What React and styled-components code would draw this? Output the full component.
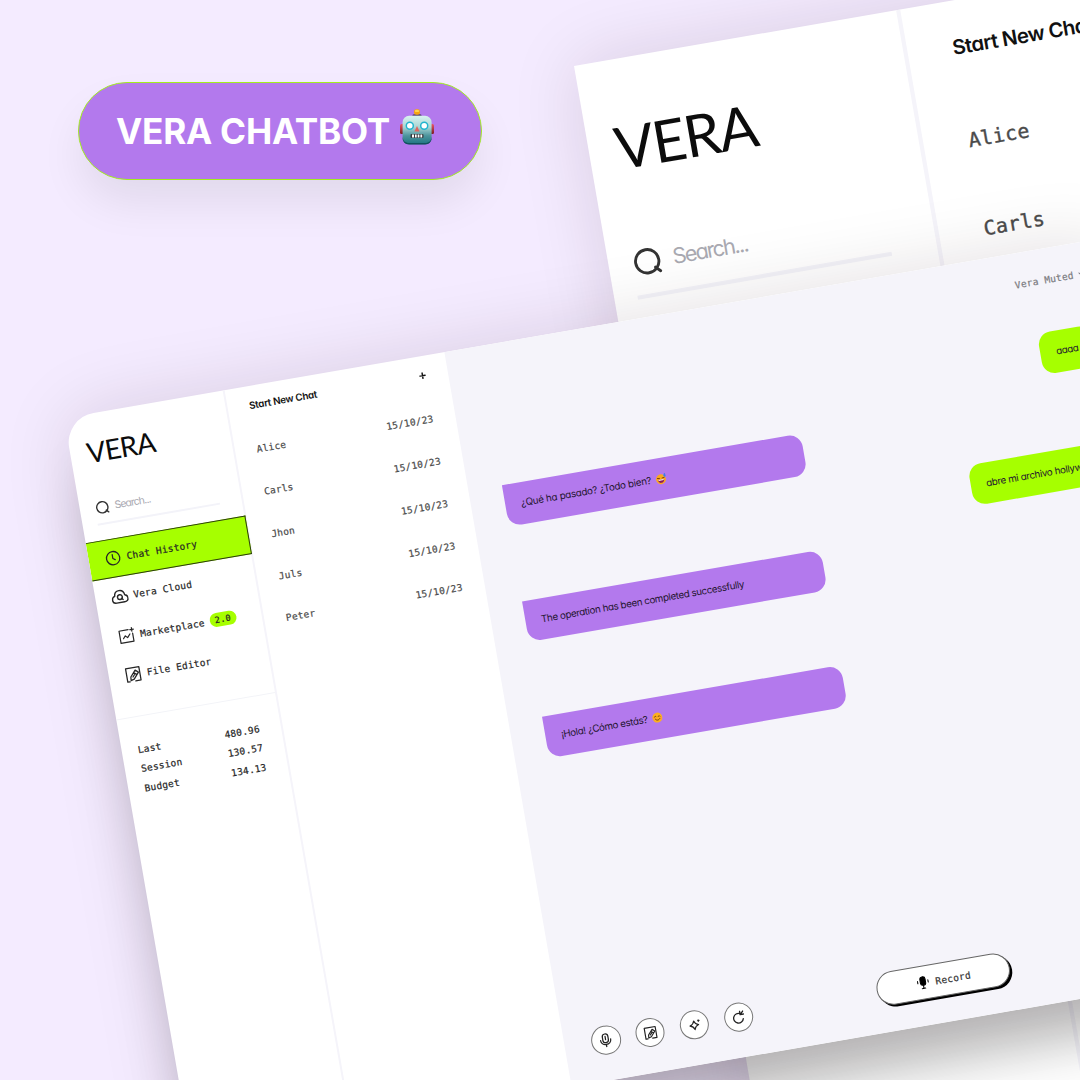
import React from "react";
import styled, { createGlobalStyle, css } from "styled-components";

const GlobalStyle = createGlobalStyle`
  *, *::before, *::after { box-sizing: border-box; }
  html, body { margin: 0; padding: 0; }
  body { background: #f4ebff; overflow: hidden; }
`;

const mono = css`
  font-family: "DejaVu Sans Mono", "Liberation Mono", monospace;
  font-size: 9.5px;
  letter-spacing: 0.23px;
  white-space: pre;
  -webkit-text-stroke: 0.2px currentColor;
`;

const rounded = css`
  font-family: Inter, Lato, sans-serif;
  font-feature-settings: "cv11" 1;
  white-space: pre;
`;

const Canvas = styled.main`
  position: relative;
  width: 1080px;
  height: 1080px;
  overflow: hidden;
  background: #f4ebff;
`;

const TitlePill = styled.header`
  position: absolute;
  left: 78px;
  top: 82px;
  z-index: 3;
  width: 404px;
  height: 98px;
  padding-left: 37px;
  display: flex;
  align-items: center;
  border: 1px solid #a2ee1e;
  border-radius: 49px;
  background: #b379ed;
  box-shadow: 0 24px 44px -2px rgba(0, 0, 0, 0.08);
`;

const Title = styled.h1`
  margin: 0;
  width: 283.5px;
  font: 750 35.2px/40px Inter, "Liberation Sans", sans-serif;
  letter-spacing: -0.25px;
  color: #fff;
  white-space: nowrap;
`;

const WindowFrame = styled.section`
  position: absolute;
  left: ${(p) => p.$x}px;
  top: ${(p) => p.$y}px;
  width: ${(p) => p.$w}px;
  height: ${(p) => p.$h}px;
  border-radius: ${(p) => p.$radius}px;
  overflow: hidden;
  background: #fff;
  transform: rotate(-9.83deg);
  transform-origin: 0 0;
  box-shadow: ${(p) => p.$shadow};
`;

const WindowBody = styled.div`
  --inset: ${(p) => p.$inset}px;
  display: flex;
  width: 1062px;
  height: 746.4px;
  transform: translateX(${(p) => p.$dx}px) scale(${(p) => p.$scale});
  transform-origin: 0 0;
`;

const Sidebar = styled.aside`
  flex: none;
  width: 163px;
  padding-top: var(--inset);
  border-right: 2px solid #f5f4fa;
  display: flex;
  flex-direction: column;
`;

const Logo = styled.div`
  height: 60px;
  padding: 18.2px 0 0 16.6px;
  font-family: Lato, Inter, sans-serif;
  font-size: 28px;
  line-height: 40px;
  letter-spacing: -0.75px;
  color: #0c0c0c;
`;

const SearchBox = styled.label`
  ${rounded}
  width: 124px;
  height: 25px;
  margin: 26.7px 0 0 15.4px;
  padding-bottom: 6.4px;
  display: flex;
  align-items: center;
  gap: 4.6px;
  border-bottom: 2px solid #f3f3f9;
  font-size: 10.4px;
  letter-spacing: -0.85px;
  color: #a9a9b1;
  svg { color: #333; }
`;

const Nav = styled.nav`
  margin-top: 15.5px;
  display: flex;
  flex-direction: column;
`;

const NavItem = styled.a`
  ${mono}
  height: 39.2px;
  width: 162px;
  padding-left: 15.9px;
  display: flex;
  align-items: center;
  gap: 5.3px;
  color: #262626;
  border: 1px solid transparent;
  border-left: 0;
  ${(p) =>
    p.$active &&
    css`
      background: #a6ff00;
      border-color: #2b3a10;
    `}
`;

const Badge = styled.span`
  height: 13.6px;
  width: 26.6px;
  display: flex;
  align-items: center;
  justify-content: center;
  border-radius: 7px;
  background: #a6ff00;
  font-size: 8.6px;
`;

const Stats = styled.dl`
  ${mono}
  margin: 22.5px 0 0;
  padding: 22.2px 21.2px 0 16.2px;
  border-top: 1.5px solid #f3f4f8;
  color: #262626;
`;

const Stat = styled.div`
  display: flex;
  justify-content: space-between;
  height: 19.5px;
  line-height: 19.5px;
  dt, dd { margin: 0; }
`;

const ChatList = styled.section`
  flex: none;
  width: 222.5px;
  padding: calc(8px + var(--inset)) 21.7px 0 21.6px;
`;

const ChatListHead = styled.div`
  ${rounded}
  display: flex;
  align-items: center;
  justify-content: space-between;
  height: 22px;
  font-size: 9.8px;
  font-weight: 600;
  letter-spacing: -0.27px;
  color: #111;
`;

const ChatRows = styled.div`
  padding-top: 13.4px;
`;

const ChatRow = styled.div`
  ${mono}
  display: flex;
  justify-content: space-between;
  height: 42.75px;
  line-height: 42.75px;
  color: #4b4b4b;
`;

const Conversation = styled.section`
  flex: 1;
  display: flex;
  flex-direction: column;
  background: #f5f4fa;
`;

const Status = styled.div`
  ${mono}
  align-self: flex-end;
  width: 102.3px;
  margin-top: 22px;
  height: 20px;
  line-height: 20px;
  display: flex;
  align-items: center;
  gap: 4.8px;
  color: #7b7b80;
`;

const Messages = styled.div`
  display: grid;
  grid-template-columns: 303.5px 1fr;
  padding: 41px 35px 0 34.3px;
`;

const Thread = styled.div`
  display: flex;
  flex-direction: column;
  align-items: ${(p) => (p.$mine ? "flex-end" : "flex-start")};
  gap: 76px;
  padding-top: ${(p) => (p.$mine ? 0 : 58)}px;
`;

const Bubble = styled.div`
  ${rounded}
  display: flex;
  align-items: center;
  gap: 4px;
  height: 41.6px;
  width: ${(p) => (p.$mine ? "auto" : "100%")};
  padding: 0 15.5px 0 16px;
  border-radius: ${(p) => (p.$mine ? "13px" : "0 13px 13px 13px")};
  background: ${(p) => (p.$mine ? "#a6ff00" : "#b379ed")};
  color: #24152f;
  font-size: 9.8px;
  letter-spacing: ${(p) => p.$track ?? -0.38}px;
`;

const Footer = styled.footer`
  margin-top: auto;
  height: 60px;
  display: flex;
  align-items: flex-start;
  padding-left: 27.9px;
`;

const Tools = styled.div`
  display: flex;
  gap: 15.6px;
  margin-top: 4.8px;
`;

const RoundButton = styled.button`
  width: 29.2px;
  height: 29.2px;
  padding: 0;
  display: grid;
  place-items: center;
  border: 1px solid #777;
  border-radius: 50%;
  background: #fff;
  color: #222;
`;

const RecordButton = styled.button`
  ${mono}
  width: 135px;
  height: 33.4px;
  margin-left: 126px;
  padding: 0;
  display: flex;
  align-items: center;
  justify-content: center;
  gap: 6px;
  border: 1px solid #666;
  border-radius: 17px;
  background: #fff;
  color: #333;
  box-shadow: 2px 2.2px 0 #000;
  svg { color: #000; }
`;

const Icon = ({ size, sw = 1.6, children }) => (
  <svg width={size} height={size} viewBox="0 0 24 24" fill="none" stroke="currentColor"
    strokeWidth={sw} strokeLinecap="round" strokeLinejoin="round">
    {children}
  </svg>
);

const SearchIcon = () => (
  <Icon size={15} sw={2.2}>
    <circle cx="12" cy="12" r="9" />
    <path d="M17.500 17.500 21 21" />
  </Icon>
);

const ClockIcon = () => (
  <Icon size={17} sw={1.8}>
    <circle cx="12" cy="12" r="9.4" />
    <path d="M11.500 7v5.400l3 2.200" />
  </Icon>
);

const CloudIcon = () => (
  <Icon size={17} sw={2}>
    <path d="M6.400 20.400C3 20.400 1 18.100 1 15.400c0-2.600 1.700-4.300 3.900-4.900C5.200 6.300 8.200 3.400 12 3.400s6.800 2.900 7.200 7.100c2.200.6 3.900 2.300 3.900 4.900 0 2.700-2.100 5-5.500 5Z" />
    <circle cx="12" cy="12.800" r="3.400" />
    <path d="m14.200 15 1.800 1.800" />
  </Icon>
);

const MarketIcon = () => (
  <Icon size={17} sw={1.7}>
    <path d="M15.500 3.500H2.500v17.500h18.500V9.500" />
    <path d="m7 15 3.200-3.500 2.800 3 4-4.500" />
    <path d="M20.500 1.500v5M18 4h5" />
  </Icon>
);

const EditorIcon = ({ size = 17, sw = 1.8 }) => (
  <Icon size={size} sw={sw}>
    <path d="M6 21.500H2.500v-19h19v19H14" />
    <path d="M7.500 20 8 15l7.500-8.500 4.200 3.500-7.500 8.700L7.500 20M12.800 9.500l4.200 3.600M11 15.500l2.500-2.800" />
  </Icon>
);

const MicIcon = () => (
  <Icon size={15} sw={2}>
    <rect x="7.500" y="2" width="9" height="14" rx="4.500" />
    <path d="M3.800 11.500c0 4.500 3.500 7.500 8.200 7.500s8.200-3 8.200-7.500M12 19v3.500M12 6v5" />
  </Icon>
);

const SparkIcon = () => (
  <Icon size={14} sw={2}>
    <path d="M11 4.500c1 4 3.500 6.500 7.500 7.500-4 1-6.500 3.500-7.500 7.500-1-4-3.500-6.500-7.500-7.500 4-1 6.500-3.500 7.500-7.500Z" />
    <path d="M19 4v2.500M17.800 5.200h2.500" />
  </Icon>
);

const RefreshIcon = () => (
  <Icon size={14.500} sw={2.200}>
    <path d="M19.500 14.500A8 8 0 1 1 15.500 5.500" />
    <path d="M15.500 1.500v5.500h5.500M15.500 7l5-5" />
  </Icon>
);

const RecordIcon = () => (
  <Icon size={14} sw={1.8}>
    <rect x="7.500" y="2" width="9" height="14.500" rx="4" fill="currentColor" />
    <path d="M12 17v5M9 22h6M3 8.500v4M21 8.500v4" />
  </Icon>
);

const PlusIcon = () => (
  <Icon size={7} sw={5}>
    <path d="M12 3v18M3 12h18" />
  </Icon>
);

const ChevronIcon = () => (
  <Icon size={8} sw={3}>
    <path d="m2 7 10 10L22 7" />
  </Icon>
);

const SweatSmile = () => (
  <svg width="11.5" height="11.5" viewBox="0 0 22 22">
    <circle cx="11" cy="12" r="9.500" fill="#fba81f" />
    <path d="M4.500 9.500 8.500 10M13.500 10l4-.500" stroke="#6b3b12" strokeWidth="1.600" strokeLinecap="round" />
    <path d="M5 12.500h12c0 4-2.500 6.500-6 6.500s-6-2.500-6-6.500Z" fill="#8e1b52" />
    <path d="M6 12.500h10v2H6Z" fill="#fff" />
    <path d="M19 .8c2 3 2.500 4 2.500 5.300a2.400 2.400 0 0 1-4.800 0C16.700 4.800 17.500 3.500 19 .8Z" fill="#3d7fe8" />
  </svg>
);

const Blush = () => (
  <svg width="11" height="11" viewBox="0 0 22 22">
    <circle cx="11" cy="11" r="10" fill="#fcb020" />
    <circle cx="5" cy="13" r="2.500" fill="#fb9a3c" />
    <circle cx="17" cy="13" r="2.500" fill="#fb9a3c" />
    <path d="M5.500 9c.8-1.800 2.700-1.800 3.500 0M13 9c.8-1.800 2.700-1.800 3.500 0M6.500 13.500c2 3.500 7 3.500 9 0"
      fill="none" stroke="#6b3b12" strokeWidth="1.700" strokeLinecap="round" />
  </svg>
);

const RobotSvg = styled.svg`
  flex: none;
  margin-top: -9px;
`;

const Robot = () => (
  <RobotSvg width="34" height="36" viewBox="0 0 34 36">
    <defs>
      <linearGradient id="face" x1="0" y1="0" x2="0" y2="1">
        <stop offset="0" stopColor="#d9f3f0" />
        <stop offset=".4" stopColor="#a9d5d4" />
        <stop offset=".7" stopColor="#4d949c" />
        <stop offset="1" stopColor="#1d7482" />
      </linearGradient>
      <linearGradient id="ear" x1="0" y1="0" x2="0" y2="1">
        <stop offset="0" stopColor="#e8566a" />
        <stop offset="1" stopColor="#7c1a20" />
      </linearGradient>
    </defs>
    <rect x="0" y="15" width="4" height="10" rx="1.500" fill="url(#ear)" />
    <rect x="30" y="15" width="4" height="10" rx="1.500" fill="url(#ear)" />
    <ellipse cx="17" cy="6.600" rx="4.600" ry="1.800" fill="#5c4b78" />
    <rect x="14" y=".3" width="6" height="5.400" rx="2.200" fill="#f5a310" />
    <ellipse cx="17" cy="1.900" rx="2.200" ry="1.200" fill="#ffd44a" />
    <rect x="2.600" y="6.800" width="29" height="28.500" rx="6.500" fill="url(#face)" />
    <path d="M2.600 28v1c0 4 2.700 6.400 6.500 6.400h16c3.800 0 6.500-2.400 6.500-6.400v-1c-.4 3.800-2.500 6-6.500 6h-16c-4 0-6.100-2.200-6.500-6Z" fill="#12515d" />
    <circle cx="9.800" cy="16.800" r="3.500" fill="#fff" stroke="#22b5cf" strokeWidth="1.500" />
    <circle cx="24.200" cy="16.800" r="3.500" fill="#fff" stroke="#22b5cf" strokeWidth="1.500" />
    <path d="m17 17 2.600 5.500h-5.200Z" fill="#e0645f" />
    <rect x="10.500" y="25" width="13" height="4" rx="1" fill="#33383d" />
    <path d="M12 25.600h2v2.800h-2ZM15 25.600h1.700v2.800H15ZM17.700 25.600h1.700v2.800h-1.700ZM20.400 25.600h1.800v2.800h-1.800Z" fill="#fff" />
  </RobotSvg>
);

const navItems = [
  { label: "Chat History", icon: <ClockIcon />, active: true },
  { label: "Vera Cloud", icon: <CloudIcon /> },
  { label: "Marketplace", icon: <MarketIcon />, badge: "2.0" },
  { label: "File Editor", icon: <EditorIcon /> },
];
const stats = [["Last", "480.96"], ["Session", "130.57"], ["Budget", "134.13"]];
const chats = ["Alice", "Carls", "Jhon", "Juls", "Peter"];

function VeraApp(props) {
  return (
    <WindowBody {...props}>
      <Sidebar>
        <Logo>VERA</Logo>
        <SearchBox><SearchIcon />Search...</SearchBox>
        <Nav>
          {navItems.map((n) => (
            <NavItem key={n.label} $active={n.active}>
              {n.icon}
              {n.label}
              {n.badge && <Badge>{n.badge}</Badge>}
            </NavItem>
          ))}
        </Nav>
        <Stats>
          {stats.map(([k, v]) => (
            <Stat key={k}><dt>{k}</dt><dd>{v}</dd></Stat>
          ))}
        </Stats>
      </Sidebar>
      <ChatList>
        <ChatListHead>Start New Chat<PlusIcon /></ChatListHead>
        <ChatRows>
          {chats.map((c) => (
            <ChatRow key={c}><span>{c}</span><span>15/10/23</span></ChatRow>
          ))}
        </ChatRows>
      </ChatList>
      <Conversation>
        <Status>Vera Muted<ChevronIcon /></Status>
        <Messages>
          <Thread>
            <Bubble $track={-0.27}>¿Qué ha pasado? ¿Todo bien?<SweatSmile /></Bubble>
            <Bubble>The operation has been completed successfully</Bubble>
            <Bubble $track={-0.4}>¡Hola! ¿Cómo estás?<Blush /></Bubble>
          </Thread>
          <Thread $mine>
            <Bubble $mine>aaaa</Bubble>
            <Bubble $mine $track={-0.34}>abre mi archivo hollywood</Bubble>
          </Thread>
        </Messages>
        <Footer>
          <Tools>
            <RoundButton><MicIcon /></RoundButton>
            <RoundButton><EditorIcon size={14} sw={2} /></RoundButton>
            <RoundButton><SparkIcon /></RoundButton>
            <RoundButton><RefreshIcon /></RoundButton>
          </Tools>
          <RecordButton><RecordIcon />Record</RecordButton>
        </Footer>
      </Conversation>
    </WindowBody>
  );
}

export default function App() {
  return (
    <Canvas>
      <GlobalStyle />
      <TitlePill>
        <Title>VERA CHATBOT</Title>
        <Robot />
      </TitlePill>
      <WindowFrame $x={573.6} $y={66} $w={1400} $h={1500} $radius={0}
        $shadow="0 0 70px rgba(40,0,20,.13)">
        <VeraApp $dx={-8} $inset={3.85} $scale={2.08} />
      </WindowFrame>
      <WindowFrame $x={63.8} $y={417.8} $w={1062} $h={746.4} $radius={30}
        $shadow="0 0 70px rgba(40,0,20,.13), 0 52px 56px -14px rgba(0,0,0,.25)">
        <VeraApp $dx={0} $inset={0} $scale={1} />
      </WindowFrame>
    </Canvas>
  );
}
